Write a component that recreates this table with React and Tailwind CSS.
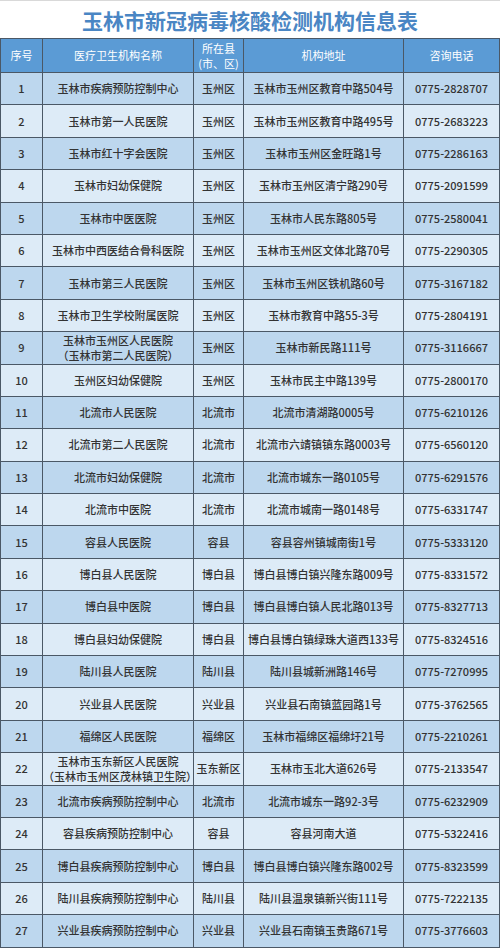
import React from "react";

const rows = [
  ["1", "玉林市疾病预防控制中心", "玉州区", "玉林市玉州区教育中路504号", "0775-2828707"],
  ["2", "玉林市第一人民医院", "玉州区", "玉林市玉州区教育中路495号", "0775-2683223"],
  ["3", "玉林市红十字会医院", "玉州区", "玉林市玉州区金旺路1号", "0775-2286163"],
  ["4", "玉林市妇幼保健院", "玉州区", "玉林市玉州区清宁路290号", "0775-2091599"],
  ["5", "玉林市中医医院", "玉州区", "玉林市人民东路805号", "0775-2580041"],
  ["6", "玉林市中西医结合骨科医院", "玉州区", "玉林市玉州区文体北路70号", "0775-2290305"],
  ["7", "玉林市第三人民医院", "玉州区", "玉林市玉州区铁机路60号", "0775-3167182"],
  ["8", "玉林市卫生学校附属医院", "玉州区", "玉林市教育中路55-3号", "0775-2804191"],
  ["9", ["玉林市玉州区人民医院", "（玉林市第二人民医院）"], "玉州区", "玉林市新民路111号", "0775-3116667"],
  ["10", "玉州区妇幼保健院", "玉州区", "玉林市民主中路139号", "0775-2800170"],
  ["11", "北流市人民医院", "北流市", "北流市清湖路0005号", "0775-6210126"],
  ["12", "北流市第二人民医院", "北流市", "北流市六靖镇镇东路0003号", "0775-6560120"],
  ["13", "北流市妇幼保健院", "北流市", "北流市城东一路0105号", "0775-6291576"],
  ["14", "北流市中医院", "北流市", "北流市城南一路0148号", "0775-6331747"],
  ["15", "容县人民医院", "容县", "容县容州镇城南街1号", "0775-5333120"],
  ["16", "博白县人民医院", "博白县", "博白县博白镇兴隆东路009号", "0775-8331572"],
  ["17", "博白县中医院", "博白县", "博白县博白镇人民北路013号", "0775-8327713"],
  ["18", "博白县妇幼保健院", "博白县", "博白县博白镇绿珠大道西133号", "0775-8324516"],
  ["19", "陆川县人民医院", "陆川县", "陆川县城新洲路146号", "0775-7270995"],
  ["20", "兴业县人民医院", "兴业县", "兴业县石南镇蓝园路1号", "0775-3762565"],
  ["21", "福绵区人民医院", "福绵区", "玉林市福绵区福绵圩21号", "0775-2210261"],
  ["22", ["玉林市玉东新区人民医院", "（玉林市玉州区茂林镇卫生院）"], "玉东新区", "玉林市玉北大道626号", "0775-2133547"],
  ["23", "北流市疾病预防控制中心", "北流市", "北流市城东一路92-3号", "0775-6232909"],
  ["24", "容县疾病预防控制中心", "容县", "容县河南大道", "0775-5322416"],
  ["25", "博白县疾病预防控制中心", "博白县", "博白县博白镇兴隆东路002号", "0775-8323599"],
  ["26", "陆川县疾病预防控制中心", "陆川县", "陆川县温泉镇新兴街111号", "0775-7222135"],
  ["27", "兴业县疾病预防控制中心", "兴业县", "兴业县石南镇玉贵路671号", "0775-3776603"],
];

const cell = "border border-[#4b5866] text-center align-middle p-0 whitespace-nowrap";

export default function App() {
  return (
    <div
      className="w-[500px] h-[948px] bg-white overflow-hidden"
      style={{ fontFamily: '"Noto Sans CJK SC", "Noto Sans", sans-serif' }}
    >
      <div className="h-[38px] border-t border-[#d9d9d9] flex items-center justify-center">
        <h1 className="text-[21px] leading-none font-semibold text-[#4a86c4] pt-[2px]">
          玉林市新冠病毒核酸检测机构信息表
        </h1>
      </div>
      <table className="w-[499px] border-collapse table-fixed text-[11px] leading-[13px] font-medium text-[#333333]">
        <colgroup>
          <col className="w-[42px]" />
          <col className="w-[151px]" />
          <col className="w-[50px]" />
          <col className="w-[160px]" />
          <col className="w-[96px]" />
        </colgroup>
        <thead>
          <tr className="h-[34px] bg-[#5b9bd5] text-white text-[11px]">
            <th className={cell + " font-normal"}>序号</th>
            <th className={cell + " font-normal"}>医疗卫生机构名称</th>
            <th className={cell + " font-normal leading-[15px]"}>
              所在县
              <br />
              (市、区)
            </th>
            <th className={cell + " font-normal"}>机构地址</th>
            <th className={cell + " font-normal"}>咨询电话</th>
          </tr>
        </thead>
        <tbody>
          {rows.map((r, i) => (
            <tr
              key={r[0]}
              className={"h-[32.4px] " + (i % 2 === 0 ? "bg-[#bdd7ee]" : "bg-[#ddebf7]")}
            >
              <td className={cell}>{r[0]}</td>
              {Array.isArray(r[1]) ? (
                <td className={cell + " leading-[15px]"}>
                  {r[1][0]}
                  <br />
                  {r[1][1]}
                </td>
              ) : (
                <td className={cell}>{r[1]}</td>
              )}
              <td className={cell}>{r[2]}</td>
              <td className={cell}>{r[3]}</td>
              <td className={cell}>{r[4]}</td>
            </tr>
          ))}
        </tbody>
      </table>
    </div>
  );
}
